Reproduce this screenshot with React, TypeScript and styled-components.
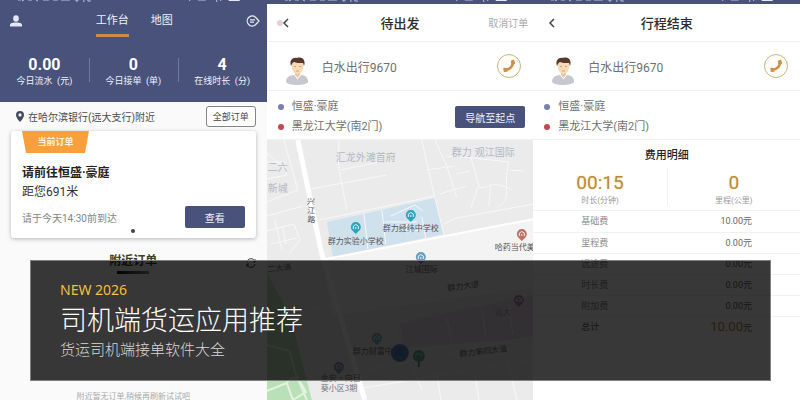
import React from "react";
import styled, { createGlobalStyle } from "styled-components";

const navy = "#48527a";

const GlobalStyle = createGlobalStyle`
  * { box-sizing: border-box; }
  body { margin: 0; font-family: Roboto, "Noto Sans CJK SC", sans-serif; color: #444; background: #fff; }
  button { font-family: inherit; padding: 0; cursor: pointer; }
  h1, h2, h3, p, dl, dd, ul { margin: 0; padding: 0; }
`;

const Page = styled.main`
  position: relative;
  display: grid;
  grid-template-columns: repeat(3, minmax(0, 1fr));
  height: 100vh;
  overflow: hidden;
`;

const Screen = styled.section<{ $tint?: string }>`
  display: flex;
  flex-direction: column;
  min-width: 0;
  overflow: hidden;
  background: ${(p) => p.$tint || "#fff"};
`;

const StatusStrip = styled.div`
  flex: none;
  height: 4px;
  background: ${navy};
  svg { display: block; width: 100%; height: 4px; }
`;

const WorkHeader = styled.header`
  flex: none;
  height: 98px;
  background: ${navy};
  color: #f2f3fa;
`;

const TopBar = styled.div`
  display: grid;
  grid-template-columns: 24px 1fr 24px;
  align-items: center;
  height: 33px;
  padding: 0 2px 0 4px;
  svg { display: block; }
`;

const IconButton = styled.button`
  display: grid;
  place-items: center;
  border: 0;
  background: none;
  color: inherit;
`;

const Tabs = styled.nav`
  display: flex;
  justify-content: center;
  gap: 22px;
`;

const Tab = styled.button<{ $active?: boolean }>`
  height: 33px;
  padding-top: 4px;
  border: 0;
  border-bottom: 3px solid ${(p) => (p.$active ? "#cf8a45" : "transparent")};
  background: none;
  color: #f0f1f8;
  font-size: 11px;
  line-height: 26px;
`;

const Stats = styled.dl`
  display: grid;
  grid-template-columns: repeat(3, 1fr);
  padding-top: 19px;
`;

const Stat = styled.div`
  display: flex;
  flex-direction: column-reverse;
  text-align: center;
  & + & {
    background: linear-gradient(#727a9c, #727a9c) left 2px / 1px 24px no-repeat;
  }
  dt { font-size: 9px; line-height: 14px; white-space: pre; }
  dd { font-size: 16px; line-height: 18px; font-weight: 700; color: #fff; }
`;

const LocationRow = styled.div`
  flex: none;
  display: flex;
  align-items: center;
  gap: 4px;
  height: 29px;
  padding: 0 11px 0 16px;
  font-size: 10px;
  color: #4a4a4a;
  p { flex: 1; white-space: nowrap; }
`;

const OutlineButton = styled.button`
  width: 50px;
  height: 21px;
  border: 1px solid #858585;
  border-radius: 3px;
  background: #fff;
  color: #444;
  font-size: 9px;
`;

const SolidButton = styled.button<{ $wide?: boolean }>`
  flex: none;
  width: ${(p) => (p.$wide ? 70 : 60)}px;
  height: 22px;
  border: 0;
  border-radius: 2px;
  background: ${navy};
  color: #f2f3fa;
  font-size: 10px;
`;

const OrderCard = styled.article`
  flex: none;
  height: 107px;
  margin: 0 11px;
  padding: 0 11px;
  border-radius: 3px;
  background: #fff;
  box-shadow: 0 1px 4px rgba(0, 0, 0, 0.28);
  h2 { margin-top: 10px; font-size: 12px; line-height: 20px; font-weight: 700; color: #222; }
  h2 + p { font-size: 12px; line-height: 19px; color: #333; }
`;

const Ribbon = styled.div`
  width: 67px;
  height: 22px;
  clip-path: polygon(0 0, 100% 0, 94% 100%, 6% 100%);
  background: #f9a03c;
  color: #fff3dc;
  font-size: 9px;
  font-weight: 700;
  line-height: 22px;
  text-align: center;
`;

const CardFooter = styled.div`
  display: flex;
  align-items: center;
  justify-content: space-between;
  margin-top: 4px;
  font-size: 10px;
  color: #858585;
`;

const PageDot = styled.span`
  display: block;
  width: 4px;
  height: 4px;
  margin: 1px auto 0;
  border-radius: 50%;
  background: #444;
`;

const Nearby = styled.div`
  flex: none;
  display: grid;
  grid-template-columns: 20px 1fr 20px;
  align-items: center;
  padding: 13px 6px 0;
  text-align: center;
  h3 { font-size: 12px; line-height: 20px; color: #3c4019; }
  h3::after {
    content: "";
    display: block;
    width: 32px;
    height: 3px;
    margin: 0 auto;
    background: linear-gradient(90deg, #111, #888);
  }
`;

const EmptyNote = styled.p`
  && { margin-top: 117px; }
  font-size: 8px;
  line-height: 12px;
  color: #aaa;
  text-align: center;
`;

const TitleBar = styled.header`
  flex: none;
  display: grid;
  grid-template-columns: 60px 1fr 60px;
  align-items: center;
  height: 38px;
  padding: 0 5px;
  border-bottom: 1px solid #f1f1f1;
  h2 { font-size: 13px; font-weight: 500; color: #2c2c2c; text-align: center; }
`;

const BackButton = styled(IconButton)`
  display: flex;
  align-items: center;
  justify-self: start;
  margin-left: 4px;
  color: #444;
`;

const TextButton = styled.button`
  justify-self: end;
  border: 0;
  background: none;
  color: #aaa;
  font-size: 10px;
`;

const DriverRow = styled.div`
  flex: none;
  display: flex;
  align-items: center;
  gap: 12px;
  height: 49px;
  padding: 0 12px 0 18px;
  border-bottom: 1px solid #f1f1f1;
  font-size: 12px;
  color: #707070;
  p { flex: 1; }
`;

const Avatar = styled.svg`
  flex: none;
  align-self: flex-end;
  width: 25px;
  height: 30px;
  margin-bottom: 4px;
`;

const CallButton = styled.button`
  display: grid;
  place-items: center;
  width: 24px;
  height: 24px;
  border: 1px solid #c9b583;
  border-radius: 50%;
  background: #fffdf8;
`;

const RouteRow = styled.div`
  flex: none;
  display: flex;
  align-items: center;
  justify-content: space-between;
  height: 49px;
  padding: 4px 8px 0 11px;
  border-bottom: 1px solid #f1f1f1;
`;

const Stops = styled.ul`
  list-style: none;
  font-size: 11px;
  line-height: 20px;
  color: #707070;
  white-space: nowrap;
`;

const Stop = styled.li<{ $color: string }>`
  display: flex;
  align-items: center;
  gap: 8px;
  &::before {
    content: "";
    width: 6px;
    height: 6px;
    border-radius: 50%;
    background: ${(p) => p.$color};
  }
`;

const MapView = styled.svg`
  flex: 1;
  display: block;
  width: 100%;
  min-height: 0;
  background: #ebebeb;
  font-family: "Noto Sans CJK SC", sans-serif;
`;

const FeeTitle = styled.h3`
  padding: 6px 0 2px;
  font-size: 11px;
  line-height: 20px;
  font-weight: 500;
  color: #222;
  text-align: center;
`;

const Totals = styled.dl`
  display: grid;
  grid-template-columns: 1fr 1fr;
  height: 43px;
  border-bottom: 1px solid #f1f1f1;
`;

const Total = styled.div`
  display: flex;
  flex-direction: column-reverse;
  justify-content: flex-end;
  height: 37px;
  padding-top: 4px;
  text-align: center;
  & + & { border-left: 1px solid #f1f1f1; }
  dt { font-size: 8px; line-height: 13px; color: #999; }
  dd { font-size: 19px; line-height: 22px; color: #b88a3c; text-shadow: 0 0 2px #ffd98a; }
`;

const FeeTable = styled.table`
  width: 100%;
  border-collapse: collapse;
  font-size: 9px;
  tr { height: 21px; border-bottom: 1px solid #f1f1f1; }
  th, td { padding: 0 48px; font-weight: 400; line-height: 14px; }
  th { text-align: left; color: #8b8b8b; }
  td { text-align: right; color: #666; }
  tfoot tr { height: 22px; border: 0; }
  tfoot th { color: #666; }
  b { font-size: 13px; font-weight: 400; color: #b98a3c; }
`;

const Banner = styled.section`
  position: absolute;
  left: 30px;
  right: 29px;
  bottom: 19px;
  height: 121px;
  padding: 19px 29px;
  border: 1px solid #808080;
  background: rgba(0, 0, 0, 0.78);
  background-clip: padding-box;
  font-family: "Noto Sans", "Noto Sans CJK SC", sans-serif;
  h1 { font-family: "Noto Sans CJK SC", sans-serif; font-size: 27px; line-height: 38px; font-weight: 300; color: #fff; }
  h1 + p { font-size: 15px; line-height: 22px; font-weight: 300; color: #d8d8d8; }
`;

const Eyebrow = styled.p`
  font-size: 14px;
  line-height: 20px;
  color: #f3bf3f;
`;

function StatusBar() {
  return (
    <StatusStrip>
      <svg viewBox="0 0 267 4" preserveAspectRatio="none" aria-hidden="true">
        <path d="M18 0h3M24 0l-2 1M28 0h4M36 0l2 1M43 0h6M53 0h5M61 0h9M77 0v2M75 0h4M84 0v2M88 0v1h3M190 0v1M198 0h8M217 0v2M221 0v1" stroke="#bfc4db" strokeWidth="1" fill="none" />
        <path d="M229 0h11" stroke="#e6e8f2" strokeWidth="2" />
      </svg>
    </StatusStrip>
  );
}

function Driver() {
  return (
    <DriverRow>
      <Avatar viewBox="0 0 25 30" aria-hidden="true">
        <path d="M1 26c0-5 4-6.500 8-7h7c4 .5 7 2 7 7-2 4-20 4-22 0z" fill="#c5c8cf" />
        <path d="M8.500 18.500l4 5 4-5z" fill="#fff" />
        <path d="M10 15h5v4l-2.500 3-2.500-3z" fill="#edc59e" />
        <ellipse cx="12.500" cy="10.500" rx="5.800" ry="7.500" fill="#f8d9b6" />
        <path d="M6 10C4 4 8 1 12 2c6-2 9 3 7 8l-1-3c-4 0-7 0-9-1-2 1-2 2-3 4z" fill="#56382c" />
        <path d="M9 10.500h2M14 10.500h2M11 15h3" stroke="#cfa27c" fill="none" />
      </Avatar>
      <p>白水出行9670</p>
      <CallButton aria-label="拨打电话">
        <svg width="14" height="14" viewBox="0 0 14 14" aria-hidden="true">
          <path d="M10.800 3.500C11 7 8 10.500 3.500 10.800" fill="none" stroke="#cd9048" strokeWidth="2.600" />
          <path d="M9.600 2.200l2-.8.8 3-2.200.8zM2 9.500l2.400.2.500 2.400-2.500.2z" fill="#cd9048" stroke="#cd9048" strokeWidth="1.400" strokeLinejoin="round" />
        </svg>
      </CallButton>
    </DriverRow>
  );
}

function Route({ children }: { children?: React.ReactNode }) {
  return (
    <RouteRow>
      <Stops>
        <Stop $color="#7780b0">恒盛·豪庭</Stop>
        <Stop $color="#c8474f">黑龙江大学(南2门)</Stop>
      </Stops>
      {children}
    </RouteRow>
  );
}

function Back({ marked }: { marked?: boolean }) {
  return (
    <BackButton aria-label="返回">
      <svg width="14" height="12" viewBox="0 0 14 12" aria-hidden="true">
        {marked && <circle cx="4" cy="6" r="3" fill="#e9cfcf" />}
        <path d="M12 2L8 6l4 4" fill="none" stroke="currentColor" strokeWidth="1.500" />
      </svg>
    </BackButton>
  );
}

function Pin({ x, y, color }: { x: number; y: number; color: string }) {
  return (
    <g transform={`translate(${x} ${y})`}>
      <path d="M0 7L-3.500 3.500A5 5 0 1 1 3.500 3.500z" fill={color} />
      <path d="M-2.500 2V-1L0-2.500 2.500-1V2M0 2V0" fill="none" stroke="#e2f3f6" />
    </g>
  );
}

function RouteMap() {
  return (
    <MapView viewBox="0 0 267 260" preserveAspectRatio="xMidYMin slice" role="img" aria-label="路线地图">
      <rect width="267" height="260" fill="#ebebeb" />
      <path d="M55 119L267 79V148L66 176z" fill="#f3f3f3" />
      <path d="M0 132L24 178 36 225 45 260H0z" fill="#b9e0b6" />
      <path d="M130 184L267 155V198L136 208z" fill="#e4dae8" />
      <path d="M60 82L168 58 177 94 66 117z" fill="#d0e1ee" />
      <g fill="none" stroke="#f8f8f8" strokeWidth="1">
        <path d="M17 0L31 50 0 62M0 76L36 66M0 13L22 32M0 22L18 22 20 35 0 39M44 49L120 35M72 0V28L80 70M74 30L112 22M53 80L168 56M155 0L168 58 177 94" />
        <path d="M168 0L180 26 190 58M160 30L186 26M173 54L199 46M203 14L212 45 204 68M179 16L207 18 242 22M242 22C235 48 247 60 230 67M212 47C225 50 220 38 246 50M177 84L190 78 267 64M243 30L258 31M190 34L203 31M224 45L222 66" />
        <path d="M115 70L119 104M97 73L101 109M124 76L148 65 156 71M155 77L159 99M118 82H150M140 84V92L153 90M8 80L15 110M0 91L27 84 33 100 22 114M16 88L19 104M4 104L30 98" />
        <path d="M0 178L70 164 267 130M70 164L267 116M128 159L136 206 155 250M180 178L185 202M215 170L219 195M242 165L246 194M77 235L267 196M90 249L267 220M170 232L174 260M207 225L212 260M241 220L250 260" />
        <path d="M0 205L23 211 28 232 40 260M0 251L20 243C26 233 33 239 39 252L26 260 20 243" stroke="#e4f3df" strokeWidth="2" />
      </g>
      <path d="M31 0L54 110 98 260" fill="none" stroke="#fff" strokeWidth="5" />
      <path d="M54 120L267 79" fill="none" stroke="#fff" strokeWidth="2" />
      <g fontSize="10" fill="#b1b9c6">
        <text x="69" y="21">汇龙外滩首府</text>
        <text x="185" y="16">群力</text>
        <text x="208" y="16">观江国际</text>
        <text x="1" y="52">新城</text>
        <text x="1" y="31">二六</text>
      </g>
      <g fontSize="8" fill="#555">
        <text transform="rotate(5 40 64)">
          <tspan x="40" y="64">兴</tspan>
          <tspan x="41" y="73">江</tspan>
          <tspan x="42" y="82">路</tspan>
        </text>
        <text x="61" y="104">群力实验小学校</text>
        <text x="116" y="91">群力经纬中学校</text>
        <text x="228" y="110">哈药当代美</text>
      </g>
      <g fontSize="8" fill="#777">
        <text x="1" y="132" transform="rotate(-6 1 132)">二大道</text>
        <text x="139" y="132">江城国际</text>
        <text x="181" y="151" transform="rotate(-8 181 151)">群力大道</text>
        <text x="228" y="175" fill="#aaa">远大</text>
        <text x="86" y="214">群力财富中</text>
        <text x="193" y="217" transform="rotate(-7 193 217)">群力第四大道</text>
        <text x="54" y="241">金安·向日</text>
        <text x="54" y="251">葵小区3期</text>
      </g>
      <Pin x={89} y={87} color="#2da4bd" />
      <Pin x={144} y={75} color="#2da4bd" />
      <Pin x={154} y={117} color="#6a9fb8" />
      <Pin x={255} y={94} color="#bd7260" />
      <Pin x={252} y={160} color="#b787b3" />
      <Pin x={110} y={198} color="#7fb2c0" />
      <Pin x={72} y={227} color="#8a9fb5" />
      <circle cx="133" cy="213" r="9" fill="#6d7fc0" />
      <path d="M133 206L139 218 133 215 127 218z" fill="#2f86c4" />
      <circle cx="152" cy="216" r="6" fill="#62b08a" />
      <path d="M152 222V227" stroke="#444" />
      <path d="M149 217V214H155V217" fill="none" stroke="#a9dfc3" />
    </MapView>
  );
}

const stats = [
  ["0.00", "今日流水  (元)"],
  ["0", "今日接单  (单)"],
  ["4", "在线时长  (分)"],
];

const fees = [
  ["基础费", "10.00元"],
  ["里程费", "0.00元"],
  ["远途费", "0.00元"],
  ["时长费", "0.00元"],
  ["附加费", "0.00元"],
];

export default function App() {
  return (
    <>
      <GlobalStyle />
      <Page>
        <Screen $tint="#fafafa">
          <StatusBar />
          <WorkHeader>
            <TopBar>
              <IconButton aria-label="个人中心">
                <svg width="12" height="12" viewBox="0 0 12 12" fill="#e4e7f5" aria-hidden="true">
                  <ellipse cx="6" cy="3.500" rx="2.800" ry="3.200" />
                  <path d="M0 11.500V10C0 8 3 7.500 6 7.500S12 8 12 10v1.500z" />
                </svg>
              </IconButton>
              <Tabs>
                <Tab $active>工作台</Tab>
                <Tab>地图</Tab>
              </Tabs>
              <IconButton aria-label="消息">
                <svg width="14" height="12" viewBox="0 0 14 12" fill="none" stroke="#e4e7f5" strokeWidth="1.300" aria-hidden="true">
                  <path d="M9.500 2.200A5 5 0 1 0 9.500 9.800L13 6z" />
                  <path d="M4 4.800h5M4 7.200h4" />
                </svg>
              </IconButton>
            </TopBar>
            <Stats>
              {stats.map(([value, label]) => (
                <Stat key={label}>
                  <dt>{label}</dt>
                  <dd>{value}</dd>
                </Stat>
              ))}
            </Stats>
          </WorkHeader>
          <LocationRow>
            <svg width="8" height="11" viewBox="0 0 8 11" aria-hidden="true">
              <path fillRule="evenodd" d="M4 0a4 4 0 0 1 4 4c0 3-4 7-4 7S0 7 0 4a4 4 0 0 1 4-4zm0 2.300a1.600 1.600 0 1 0 0 3.200 1.600 1.600 0 0 0 0-3.200z" fill="#444a60" />
            </svg>
            <p>在哈尔滨银行(远大支行)附近</p>
            <OutlineButton>全部订单</OutlineButton>
          </LocationRow>
          <OrderCard>
            <Ribbon>当前订单</Ribbon>
            <h2>请前往恒盛·豪庭</h2>
            <p>距您691米</p>
            <CardFooter>
              <span>请于今天14:30前到达</span>
              <SolidButton>查看</SolidButton>
            </CardFooter>
            <PageDot />
          </OrderCard>
          <Nearby>
            <span />
            <h3>附近订单</h3>
            <IconButton aria-label="刷新">
              <svg width="12" height="12" viewBox="0 0 12 12" fill="none" stroke="#444" aria-hidden="true">
                <path d="M2 5a4 4 0 0 1 7-2l1 2M10 7a4 4 0 0 1-7 2L2 7M10 2v3H8M2 10V7h2" />
              </svg>
            </IconButton>
          </Nearby>
          <EmptyNote>附近暂无订单,稍候再刷新试试吧</EmptyNote>
        </Screen>

        <Screen>
          <StatusBar />
          <TitleBar>
            <Back marked />
            <h2>待出发</h2>
            <TextButton>取消订单</TextButton>
          </TitleBar>
          <Driver />
          <Route>
            <SolidButton $wide>导航至起点</SolidButton>
          </Route>
          <RouteMap />
        </Screen>

        <Screen>
          <StatusBar />
          <TitleBar>
            <Back />
            <h2>行程结束</h2>
          </TitleBar>
          <Driver />
          <Route />
          <FeeTitle>费用明细</FeeTitle>
          <Totals>
            <Total>
              <dt>时长(分钟)</dt>
              <dd>00:15</dd>
            </Total>
            <Total>
              <dt>里程(公里)</dt>
              <dd>0</dd>
            </Total>
          </Totals>
          <FeeTable>
            <tbody>
              {fees.map(([name, amount]) => (
                <tr key={name}>
                  <th scope="row">{name}</th>
                  <td>{amount}</td>
                </tr>
              ))}
            </tbody>
            <tfoot>
              <tr>
                <th scope="row">总计</th>
                <td><b>10.00</b>元</td>
              </tr>
            </tfoot>
          </FeeTable>
        </Screen>

        <Banner>
          <Eyebrow>NEW 2026</Eyebrow>
          <h1>司机端货运应用推荐</h1>
          <p>货运司机端接单软件大全</p>
        </Banner>
      </Page>
    </>
  );
}
